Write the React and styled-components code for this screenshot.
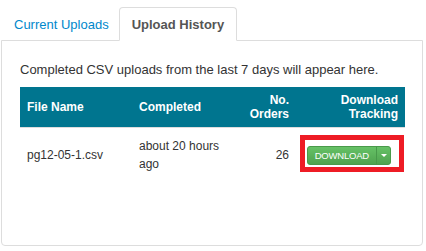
import styled, {createGlobalStyle} from "styled-components";

const GlobalStyle = createGlobalStyle`
  body {
    margin: 0;
    background: #fff;
    font-family: "Liberation Sans", Arial, sans-serif;
    color: #333;
  }
`;

const Page = styled.div`
  padding: 7px 0 0 1px;
  width: 422px;
`;

const Tabs = styled.ul`
  display: flex;
  list-style: none;
  margin: 0;
  padding: 0;
  position: relative;
  z-index: 1;
`;

const Tab = styled.li`
  margin-right: 2px;
  margin-bottom: -1px;
  height: 34px;
  box-sizing: border-box;
  display: flex;
  align-items: center;
  padding: ${(p) => (p.active ? "0 12px" : "0 7px 0 12px")};
  font-size: 13px;
  font-weight: ${(p) => (p.active ? "bold" : "normal")};
  color: ${(p) => (p.active ? "#555" : "#0088cc")};
  background: ${(p) => (p.active ? "#fff" : "transparent")};
  border: 1px solid ${(p) => (p.active ? "#ddd" : "transparent")};
  border-bottom-color: ${(p) => (p.active ? "#fff" : "transparent")};
  border-radius: 4px 4px 0 0;
  cursor: pointer;
`;

const Panel = styled.div`
  box-sizing: border-box;
  height: 206px;
  border: 1px solid #ddd;
  border-radius: 0 0 4px 4px;
  padding: 19px 17px 0 18px;
`;

const Intro = styled.p`
  margin: 0 0 7px;
  font-size: 13px;
  line-height: 20px;
  color: #333;
  white-space: nowrap;
`;

const Table = styled.table`
  width: 385px;
  border-collapse: collapse;
  table-layout: fixed;
  font-size: 12px;
`;

const Th = styled.th`
  background: #00758f;
  color: #fff;
  font-weight: bold;
  text-align: ${(p) => p.align || "left"};
  padding: 6px 7px;
  height: 40px;
  box-sizing: border-box;
  line-height: 14px;
  vertical-align: middle;
`;

const Td = styled.td`
  text-align: ${(p) => p.align || "left"};
  padding: 9px ${(p) => p.padRight || "7px"} 8px 7px;
  line-height: 18px;
  vertical-align: middle;
  border-top: 1px solid #ddd;
  color: #333;
`;

const Highlight = styled.span`
  position: relative;
  display: inline-flex;
  vertical-align: middle;
  &::after {
    content: "";
    position: absolute;
    left: -7px;
    right: -13px;
    top: -11px;
    bottom: -7px;
    border: 5px solid #ee1c25;
    pointer-events: none;
  }
`;

const SplitButton = styled.div`
  display: inline-flex;
  height: 19px;
  border-radius: 3px;
  border: 1px solid #4a9a4a;
  box-sizing: border-box;
  background: linear-gradient(#66c166, #4fa34f);
  overflow: hidden;
`;

const Main = styled.button`
  border: 0;
  background: transparent;
  color: #fff;
  font-family: "Liberation Sans", Arial, sans-serif;
  font-size: 9.5px;
  letter-spacing: -0.2px;
  text-transform: uppercase;
  padding: 0 7px 0 7px;
  line-height: 17px;
  cursor: pointer;
`;

const Caret = styled.button`
  border: 0;
  border-left: 1px solid #48994a;
  background: transparent;
  width: 14px;
  padding: 0;
  display: flex;
  align-items: center;
  justify-content: center;
  cursor: pointer;
  &::before {
    content: "";
    border-left: 3px solid transparent;
    border-right: 3px solid transparent;
    border-top: 3px solid #fff;
  }
`;

const uploads = [
  {file: "pg12-05-1.csv", completed: "about 20 hours ago", orders: 26},
];

export default function App() {
  return (
    <Page>
      <GlobalStyle />
      <Tabs>
        <Tab>Current Uploads</Tab>
        <Tab active>Upload History</Tab>
      </Tabs>
      <Panel>
        <Intro>Completed CSV uploads from the last 7 days will appear here.</Intro>
        <Table>
          <colgroup>
            <col style={{width: 112}} />
            <col style={{width: 100}} />
            <col style={{width: 64}} />
            <col style={{width: 109}} />
          </colgroup>
          <thead>
            <tr>
              <Th>File Name</Th>
              <Th>Completed</Th>
              <Th align="right">No. Orders</Th>
              <Th align="right">Download Tracking</Th>
            </tr>
          </thead>
          <tbody>
            {uploads.map((u) => (
              <tr key={u.file}>
                <Td>{u.file}</Td>
                <Td>{u.completed}</Td>
                <Td align="right">{u.orders}</Td>
                <Td align="right" padRight="14px">
                  <Highlight>
                    <SplitButton>
                      <Main>Download</Main>
                      <Caret />
                    </SplitButton>
                  </Highlight>
                </Td>
              </tr>
            ))}
          </tbody>
        </Table>
      </Panel>
    </Page>
  );
}
